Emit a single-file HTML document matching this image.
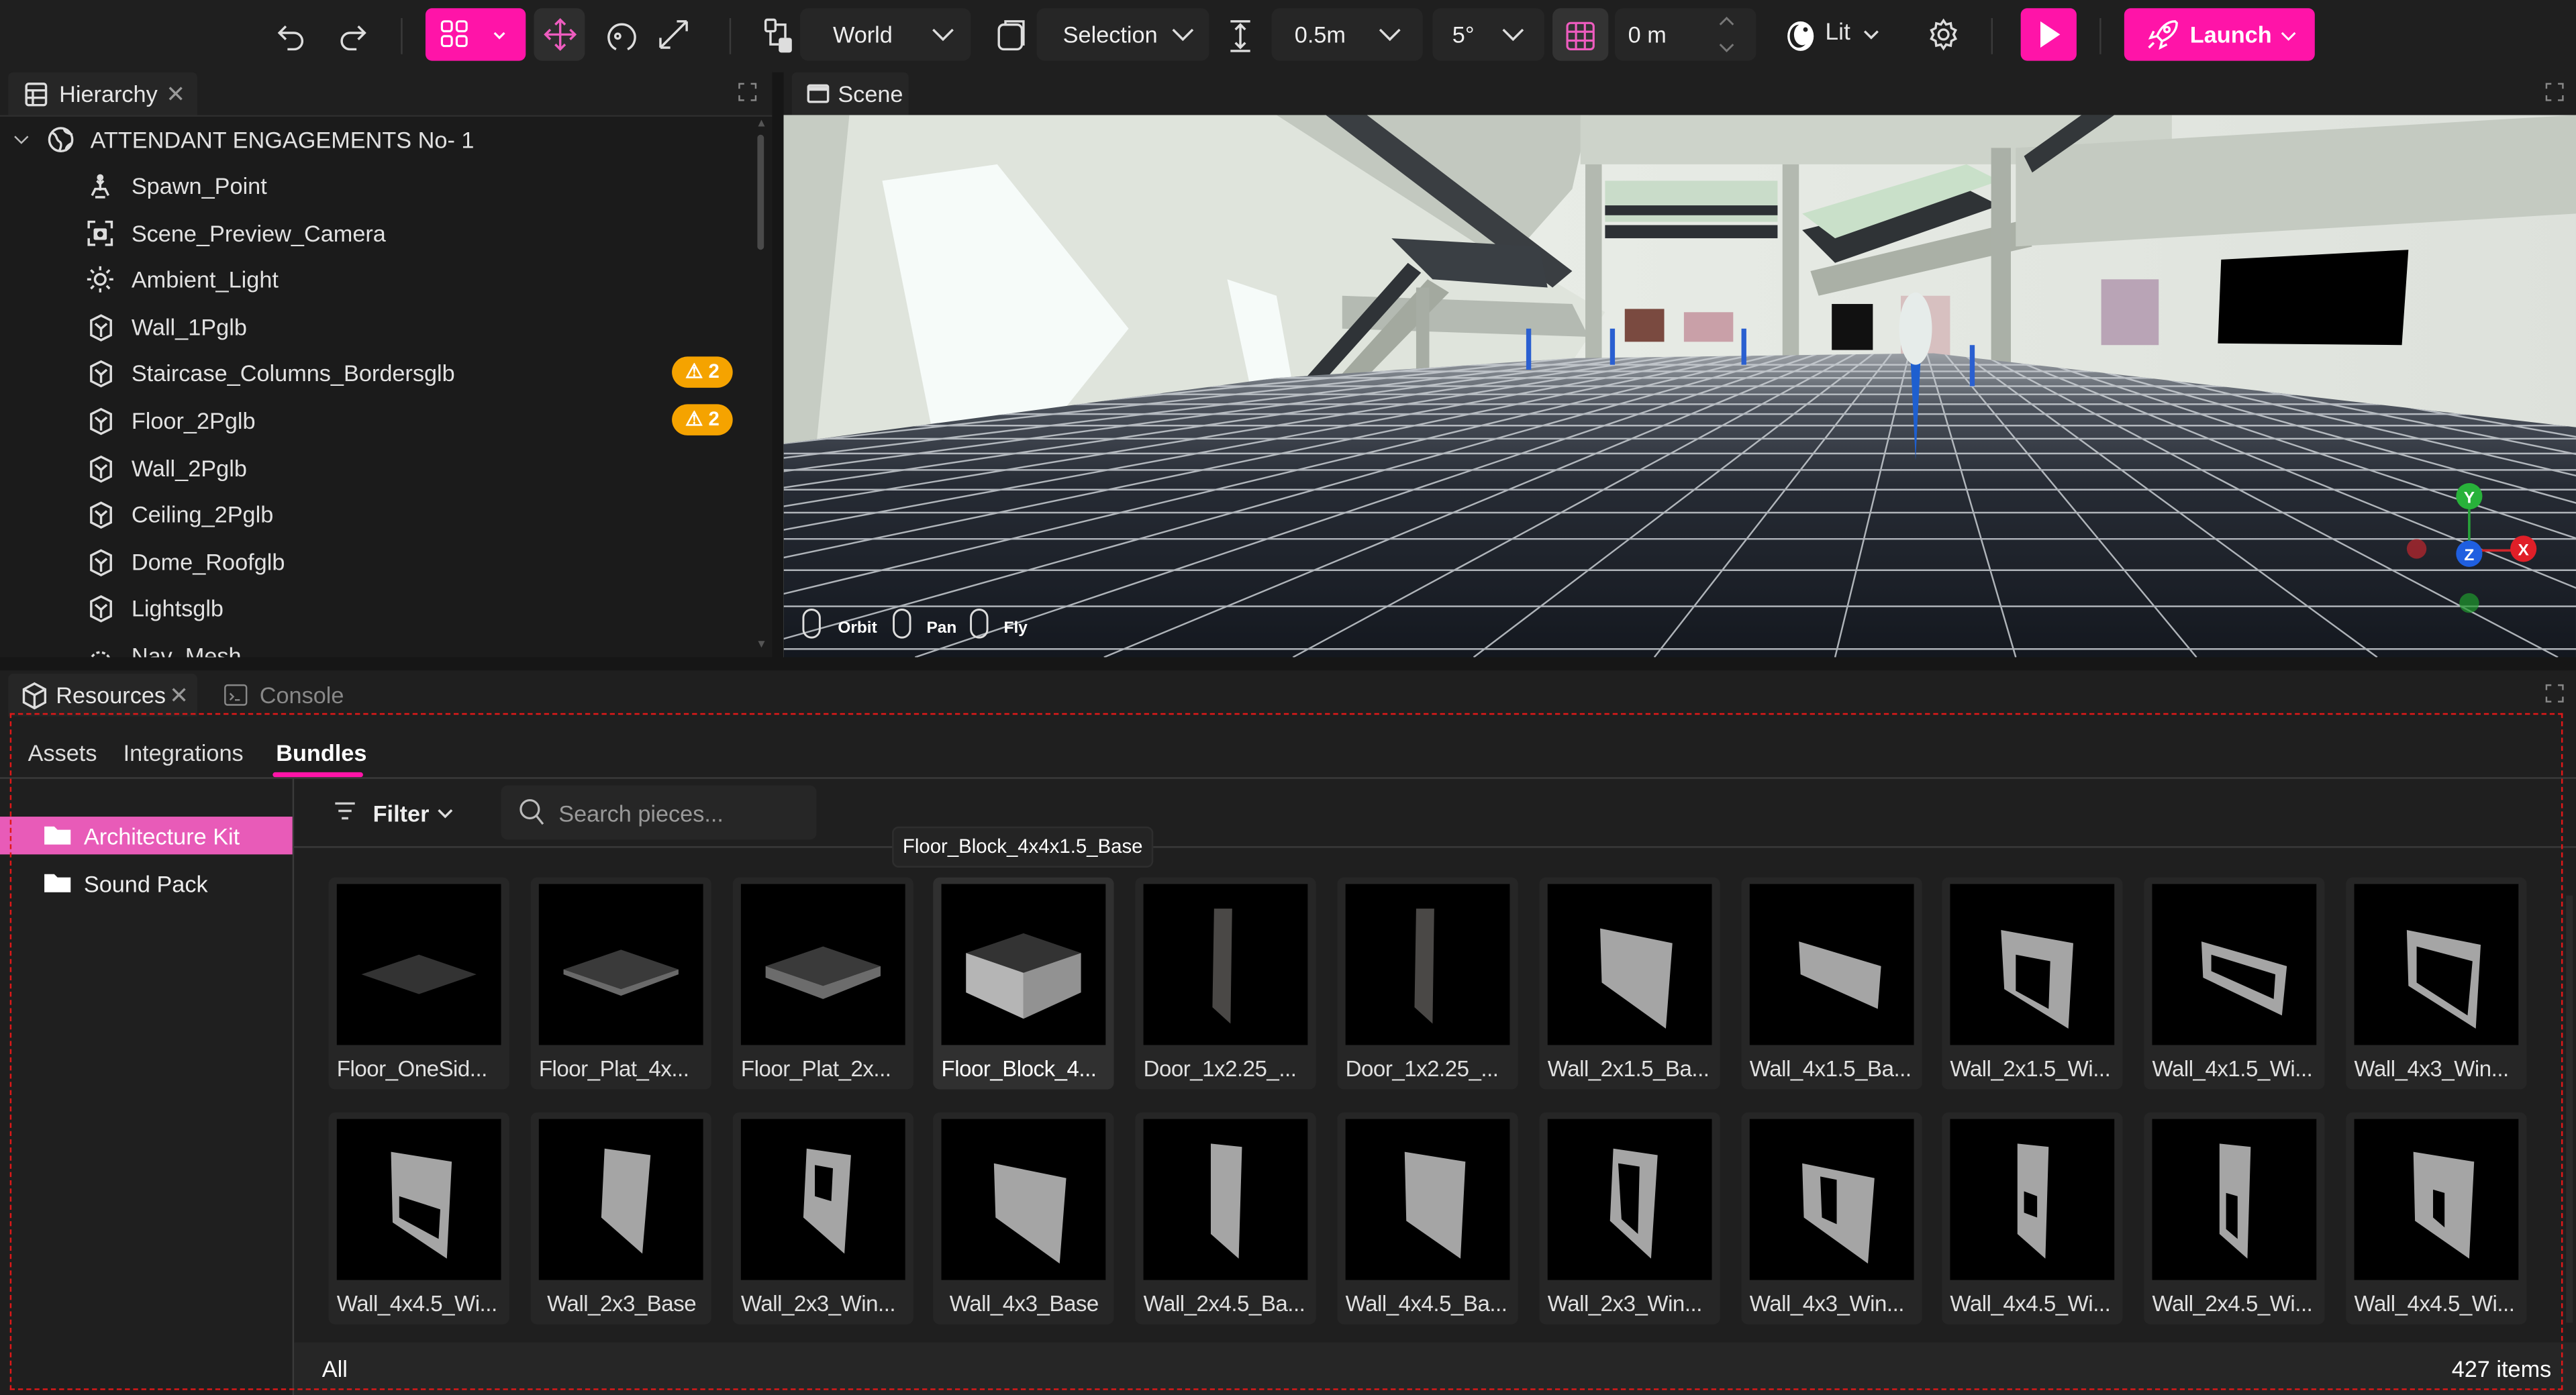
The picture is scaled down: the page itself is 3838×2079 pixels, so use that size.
<!DOCTYPE html>
<html><head><meta charset="utf-8">
<style>
*{box-sizing:border-box;margin:0;padding:0}
html,body{width:3838px;height:2079px;overflow:hidden;background:#1b1b1b}
#w{position:absolute;left:0;top:0;width:1568px;height:849px;transform:scale(2.4477,2.4488);transform-origin:0 0;background:#1b1b1b;font-family:"Liberation Sans",sans-serif;color:#e6e6e6;overflow:hidden}
.a{position:absolute}
.tb{left:0;top:0;width:1568px;height:44px;background:#1f1f1f}
.dd{background:#262626;border-radius:5px;height:32px;top:5px;font-size:14px;color:#eee;line-height:32px}
.sep{width:1px;height:22px;top:11px;background:#3a3a3a}
.pink{background:#ff14a8;border-radius:4px}
.ic{stroke:#ddd;fill:none;stroke-width:1.4}
.tab{background:#262626;height:26px;border-radius:3px 3px 0 0;font-size:14px;line-height:26px}
.row{left:0;height:28px;font-size:14px;line-height:28px;color:#e2e2e2}
.badge{left:409px;width:37px;height:19px;background:#f5a300;border-radius:10px;color:#fff;font-size:12px;font-weight:bold;line-height:19px;text-align:center}
.card{width:110px;height:129px;background:#262626;border-radius:4px}
.card .th{position:absolute;left:5px;top:4px;width:100px;height:98px;background:#000}
.card .lb{position:absolute;left:5px;top:109px;font-size:13.5px;color:#e0e0e0;white-space:nowrap;letter-spacing:-0.2px}
</style></head><body><div id="w">

<!-- toolbar -->
<div class="a tb"></div>
<svg class="a" style="left:166px;top:11px" width="60" height="22"><path class="ic" d="M8 5L4 9l4 4M4 9h9a5 5 0 010 10H9"/><path class="ic" d="M52 5l4 4-4 4M56 9h-9a5 5 0 000 10h4"/></svg>
<div class="a sep" style="left:244px"></div>
<div class="a pink" style="left:259px;top:5px;width:61px;height:32px"></div>
<svg class="a" style="left:268px;top:12px" width="46" height="18"><g fill="none" stroke="#fff" stroke-width="1.3"><rect x="1" y="1" width="6" height="6" rx="1.5"/><rect x="10" y="1" width="6" height="6" rx="1.5"/><rect x="1" y="10" width="6" height="6" rx="1.5"/><rect x="10" y="10" width="6" height="6" rx="1.5"/><path d="M33 8l3 3 3-3"/></g></svg>
<div class="a" style="left:325px;top:5px;width:31px;height:32px;background:#2e2e2e;border-radius:5px"></div>
<svg class="a" style="left:330px;top:10px" width="22" height="22"><g stroke="#ee5cbf" stroke-width="1.4" fill="none"><path d="M11 2v18M2 11h18M8 5l3-3 3 3M8 17l3 3 3-3M5 8l-3 3 3 3M17 8l3 3-3 3"/></g></svg>
<svg class="a" style="left:365px;top:10px" width="60" height="24"><path class="ic" d="M10 20a8 8 0 117 0"/><circle cx="11" cy="12" r="1.5" class="ic"/><path class="ic" d="M37 19L53 3M37 19v-6M37 19h6M53 3h-6M53 3v6"/></svg>
<div class="a sep" style="left:444px"></div>
<svg class="a" style="left:465px;top:11px" width="20" height="22"><rect x="1" y="1" width="6" height="7" rx="1" class="ic"/><rect x="9" y="12" width="8" height="9" rx="1.5" fill="#ddd"/><path class="ic" d="M4 8v8h5M7 4h6v8"/></svg>
<div class="a dd" style="left:487px;width:104px"><span style="position:absolute;left:20px">World</span><svg class="a" style="left:80px;top:12px" width="14" height="8"><path class="ic" d="M1 1l6 6 6-6"/></svg></div>
<svg class="a" style="left:606px;top:11px" width="20" height="22"><rect x="2" y="4" width="14" height="15" rx="3" class="ic"/><path class="ic" d="M6 4V2h11v14h-1"/></svg>
<div class="a dd" style="left:631px;width:105px"><span style="position:absolute;left:16px">Selection</span><svg class="a" style="left:82px;top:12px" width="14" height="8"><path class="ic" d="M1 1l6 6 6-6"/></svg></div>
<svg class="a" style="left:747px;top:11px" width="16" height="22"><path class="ic" d="M2 2h12M2 20h12M8 4v14M5 7l3-3 3 3M5 15l3 3 3-3"/></svg>
<div class="a dd" style="left:774px;width:92px"><span style="position:absolute;left:14px">0.5m</span><svg class="a" style="left:65px;top:12px" width="14" height="8"><path class="ic" d="M1 1l6 6 6-6"/></svg></div>
<div class="a dd" style="left:872px;width:68px"><span style="position:absolute;left:12px">5°</span><svg class="a" style="left:42px;top:12px" width="14" height="8"><path class="ic" d="M1 1l6 6 6-6"/></svg></div>
<div class="a dd" style="left:945px;width:34px;background:#333"></div>
<svg class="a" style="left:953px;top:13px" width="18" height="18"><g stroke="#ee5cbf" stroke-width="1.3" fill="none"><rect x="1" y="1" width="16" height="16" rx="2"/><path d="M6.3 1v16M11.7 1v16M1 6.3h16M1 11.7h16"/></g></svg>
<div class="a dd" style="left:983px;width:86px"><span style="position:absolute;left:8px">0 m</span><svg class="a" style="left:62px;top:4px" width="12" height="24"><path d="M2 6l4-4 4 4M2 18l4 4 4-4" stroke="#777" fill="none" stroke-width="1.2"/></svg></div>
<svg class="a" style="left:1086px;top:11px" width="20" height="22"><ellipse cx="10" cy="11" rx="8" ry="9" fill="#fff"/><ellipse cx="9" cy="11" rx="5.6" ry="7" fill="#1f1f1f"/><ellipse cx="11" cy="10" rx="5" ry="6.5" fill="#fff"/><circle cx="13" cy="7" r="1.4" fill="#1f1f1f"/></svg>
<div class="a" style="left:1111px;top:12px;font-size:14.5px">Lit</div>
<svg class="a" style="left:1134px;top:18px" width="10" height="6"><path class="ic" d="M1 1l4 4 4-4"/></svg>
<svg class="a" style="left:1173px;top:11px" width="20" height="20"><circle cx="10" cy="10" r="3" class="ic"/><path class="ic" d="M10 1.5l1.6 2.4 2.8-.7.4 2.9 2.6 1.3-1.3 2.6 1.3 2.6-2.6 1.3-.4 2.9-2.8-.7L10 18.5l-1.6-2.4-2.8.7-.4-2.9-2.6-1.3L3.9 10 2.6 7.4l2.6-1.3.4-2.9 2.8.7z"/></svg>
<div class="a sep" style="left:1212px"></div>
<div class="a pink" style="left:1230px;top:5px;width:34px;height:32px"></div>
<svg class="a" style="left:1240px;top:12px" width="16" height="18"><path d="M2 1l12 8-12 8z" fill="#fff"/></svg>
<div class="a sep" style="left:1278px"></div>
<div class="a pink" style="left:1293px;top:5px;width:116px;height:32px"></div>
<svg class="a" style="left:1306px;top:11px" width="22" height="20"><g stroke="#fff" stroke-width="1.4" fill="none"><path d="M18 2c-5 0-9 4-11 9l3 3c5-2 9-6 9-11z"/><circle cx="13" cy="7" r="1.6"/><path d="M7 11L3 12l2-4M10 14l-1 4 4-2M5 15l-3 3"/></g></svg>
<div class="a" style="left:1333px;top:13px;font-size:14px;font-weight:bold;color:#fff">Launch</div>
<svg class="a" style="left:1388px;top:19px" width="10" height="6"><path d="M1 1l4 4 4-4" stroke="#fff" fill="none" stroke-width="1.2"/></svg>

<!-- hierarchy -->
<div class="a" style="left:0;top:44px;width:1568px;height:26px;background:#1f1f1f"></div>
<div class="a tab" style="left:5px;top:44px;width:115px"><svg class="a" style="left:10px;top:6px" width="14" height="15"><g class="ic" stroke-width="1.2"><rect x="1" y="1" width="12" height="13" rx="1.5"/><path d="M1 5h12M1 9.5h12M5 5v9"/></g></svg><span style="position:absolute;left:31px">Hierarchy</span><span style="position:absolute;left:96px;color:#999">✕</span></div>
<svg class="a" style="left:449px;top:50px" width="12" height="12"><path d="M1 4V1h3M8 1h3v3M11 8v3H8M4 11H1V8" stroke="#888" fill="none"/></svg>
<div class="a" style="left:0;top:70px;width:470px;height:1px;background:#2e2e2e"></div>
<div class="a row" style="top:71px"><svg class="a" style="left:8px;top:11px" width="10" height="6"><path d="M1 1l4 4 4-4" stroke="#bbb" fill="none"/></svg><svg class="a" style="left:29px;top:6px" width="16" height="16"><circle cx="8" cy="8" r="7" class="ic" stroke-width="1.2"/><path class="ic" stroke-width="1.1" d="M3 4c3 1 2 4 4 5s1 4 0 6M10 1c0 3 3 3 5 4M11 15c0-3 2-4 4-5"/></svg><span style="position:absolute;left:55px;white-space:nowrap">ATTENDANT ENGAGEMENTS No- 1</span></div>
<div class="a" style="left:0;top:99px;width:460px;height:301px;overflow:hidden">
<div class="a row" style="top:0"><svg class="a" style="left:53px;top:6px" width="16" height="16"><path d="M5 15h6M8 2v9M6 5l2 2 2-2M3 14l2-4h6l2 4" stroke="#ddd" fill="none" stroke-width="1.4"/><circle cx="8" cy="3" r="2" fill="#ddd"/></svg><span class="a" style="left:80px">Spawn_Point</span></div>
<div class="a row" style="top:28.6px"><svg class="a" style="left:53px;top:6px" width="16" height="16"><path class="ic" stroke-width="1.2" d="M1 5V1h4M11 1h4v4M15 11v4h-4M5 15H1v-4"/><rect x="4" y="5" width="8" height="7" rx="1" fill="#ddd"/><circle cx="8" cy="8.5" r="1.8" fill="#1b1b1b"/></svg><span class="a" style="left:80px">Scene_Preview_Camera</span></div>
<div class="a row" style="top:57.2px"><svg class="a" style="left:53px;top:6px" width="16" height="16"><circle cx="8" cy="8" r="3.2" class="ic" stroke-width="1.2"/><path class="ic" stroke-width="1.2" d="M8 0v2.5M8 13.5V16M0 8h2.5M13.5 8H16M2.3 2.3l1.8 1.8M11.9 11.9l1.8 1.8M2.3 13.7l1.8-1.8M11.9 4.1l1.8-1.8"/></svg><span class="a" style="left:80px">Ambient_Light</span></div>
<div class="a row" style="top:85.8px"><svg class="a" style="left:54px;top:6px" width="15" height="17"><path class="ic" stroke-width="1.2" d="M7.5 1l6 3v9l-6 3-6-3V4zM4 6l3.5 3 3.5-3M7.5 9v5"/></svg><span class="a" style="left:80px">Wall_1Pglb</span></div>
<div class="a row" style="top:114.4px"><svg class="a" style="left:54px;top:6px" width="15" height="17"><path class="ic" stroke-width="1.2" d="M7.5 1l6 3v9l-6 3-6-3V4zM4 6l3.5 3 3.5-3M7.5 9v5"/></svg><span class="a" style="left:80px">Staircase_Columns_Bordersglb</span></div>
<div class="a row" style="top:143px"><svg class="a" style="left:54px;top:6px" width="15" height="17"><path class="ic" stroke-width="1.2" d="M7.5 1l6 3v9l-6 3-6-3V4zM4 6l3.5 3 3.5-3M7.5 9v5"/></svg><span class="a" style="left:80px">Floor_2Pglb</span></div>
<div class="a row" style="top:171.6px"><svg class="a" style="left:54px;top:6px" width="15" height="17"><path class="ic" stroke-width="1.2" d="M7.5 1l6 3v9l-6 3-6-3V4zM4 6l3.5 3 3.5-3M7.5 9v5"/></svg><span class="a" style="left:80px">Wall_2Pglb</span></div>
<div class="a row" style="top:200.2px"><svg class="a" style="left:54px;top:6px" width="15" height="17"><path class="ic" stroke-width="1.2" d="M7.5 1l6 3v9l-6 3-6-3V4zM4 6l3.5 3 3.5-3M7.5 9v5"/></svg><span class="a" style="left:80px">Ceiling_2Pglb</span></div>
<div class="a row" style="top:228.8px"><svg class="a" style="left:54px;top:6px" width="15" height="17"><path class="ic" stroke-width="1.2" d="M7.5 1l6 3v9l-6 3-6-3V4zM4 6l3.5 3 3.5-3M7.5 9v5"/></svg><span class="a" style="left:80px">Dome_Roofglb</span></div>
<div class="a row" style="top:257.4px"><svg class="a" style="left:54px;top:6px" width="15" height="17"><path class="ic" stroke-width="1.2" d="M7.5 1l6 3v9l-6 3-6-3V4zM4 6l3.5 3 3.5-3M7.5 9v5"/></svg><span class="a" style="left:80px">Lightsglb</span></div>
<div class="a row" style="top:286px"><svg class="a" style="left:53px;top:6px" width="16" height="16"><path class="ic" stroke-width="1.2" d="M2 12a6 6 0 0112 0M1 14h14" stroke-dasharray="2 1.5"/></svg><span class="a" style="left:80px">Nav_Mesh</span></div>
</div>
<div class="a badge" style="top:217px">⚠ 2</div>
<div class="a badge" style="top:246px">⚠ 2</div>
<div class="a" style="left:461px;top:82px;width:4px;height:70px;background:#4a4a4a;border-radius:2px"></div>
<div class="a" style="left:460px;top:72px;font-size:7px;color:#555">▲</div>
<div class="a" style="left:460px;top:389px;font-size:7px;color:#555">▼</div>
<div class="a" style="left:470px;top:44px;width:7px;height:358px;background:#161616"></div>

<!-- scene tab -->
<div class="a tab" style="left:482px;top:44px;width:71px"><svg class="a" style="left:9px;top:7px" width="14" height="12"><rect x="1" y="1" width="12" height="10" rx="1" class="ic" stroke-width="1.3"/><path d="M1 3h12" stroke="#ddd" stroke-width="2.5"/></svg><span style="position:absolute;left:28px">Scene</span></div>
<svg class="a" style="left:1549px;top:50px" width="12" height="12"><path d="M1 4V1h3M8 1h3v3M11 8v3H8M4 11H1V8" stroke="#888" fill="none"/></svg>

<!-- scene viewport -->
<svg class="a" style="left:477px;top:70px" width="1091" height="330" viewBox="0 0 1091 330">
<defs>
<linearGradient id="wl" x1="0" x2="1"><stop offset="0" stop-color="#d3d9d0"/><stop offset=".3" stop-color="#eaeee8"/><stop offset="1" stop-color="#dde1db"/></linearGradient>
<linearGradient id="fl" x1="0" y1="0" x2="0" y2="1"><stop offset="0" stop-color="#a6abb0"/><stop offset=".2" stop-color="#4a505a"/><stop offset=".45" stop-color="#262b34"/><stop offset="1" stop-color="#14181f"/></linearGradient>
<clipPath id="fc"><path d="M0 200L300 160L480 148L700 145L1091 190V330H0z"/></clipPath>
</defs>
<rect width="1091" height="330" fill="url(#wl)"/>
<path d="M0 0h300L500 120 480 150 0 200z" fill="#dfe4dc"/>
<path d="M60 40L130 30 210 130 170 180 90 190z" fill="#f6fbf9"/>
<path d="M270 100L300 110 310 165 285 170z" fill="#f6fbf9"/>
<path d="M0 0h40L20 200H0z" fill="#c6ccc3"/>
<path d="M300 0h190L480 45 440 90z" fill="#c2c8bf"/>
<path d="M330 0l25 0 125 95-12 10z" fill="#3a3e42"/>
<path d="M370 75l90 5 5 25-70-5z" fill="#3a3f44"/>
<path d="M340 110l140 5 10 20-150-5z" fill="#a9afa7" opacity=".8"/>
<path d="M300 180L380 90 388 96 308 185z" fill="#2f3337"/>
<path d="M315 185L392 100 405 108 325 190z" fill="#a3a99f"/>
<rect x="385" y="105" width="8" height="75" fill="#a7ada4"/>
<rect x="485" y="0" width="360" height="30" fill="#cdd3ca"/>
<rect x="488" y="30" width="10" height="140" fill="#b3b9b0"/>
<rect x="608" y="30" width="10" height="140" fill="#b3b9b0"/>
<rect x="500" y="40" width="105" height="25" fill="#c9dcc9"/>
<rect x="500" y="55" width="105" height="6" fill="#2d3135"/>
<rect x="500" y="67" width="105" height="8" fill="#2d3135"/>
<path d="M620 70L720 45 740 55 640 90z" fill="#2f3336"/>
<path d="M620 60L720 30 740 40 640 75z" fill="#c9e0c9"/>
<path d="M625 95L750 65 760 80 630 110z" fill="#aab0a6"/>
<rect x="735" y="20" width="12" height="150" fill="#aab0a7"/>
<path d="M750 20L1091 0V60L750 80z" fill="#c4cac1"/>
<path d="M755 25L790 0h20L760 35z" fill="#33373a"/>
<rect x="512" y="118" width="24" height="20" fill="#7a4a40"/>
<rect x="548" y="120" width="30" height="18" fill="#c9a0a8"/>
<rect x="638" y="115" width="25" height="28" fill="#111"/>
<rect x="680" y="110" width="30" height="40" fill="#d7c0c0"/>
<rect x="802" y="100" width="35" height="40" fill="#b9a4b6"/>
<path d="M875 88L989 82 985 140 873 139z" fill="#000"/>
<rect x="0" y="140" width="1091" height="190" fill="url(#fl)" clip-path="url(#fc)"/>
<g clip-path="url(#fc)" stroke="#c9ced3" stroke-width="1" fill="none" opacity=".85">
<path d="M0 152H1091M0 156H1091M0 160H1091M0 165H1091M0 170H1091M0 176H1091M0 182H1091M0 189H1091M0 197H1091M0 206H1091M0 216H1091M0 228H1091M0 242H1091M0 258H1091M0 277H1091M0 299H1091M0 325H1091"/>
<path d="M690 125L-1800 330M690 125L-1600 330M690 125L-1400 330M690 125L-1200 330M690 125L-1000 330M690 125L-850 330M690 125L-700 330M690 125L-560 330M690 125L-420 330M690 125L-290 330M690 125L-160 330M690 125L-40 330M690 125L80 330M690 125L195 330M690 125L310 330M690 125L420 330M690 125L530 330M690 125L640 330M690 125L750 330M690 125L860 330M690 125L970 330M690 125L1080 330M690 125L1195 330M690 125L1310 330M690 125L1430 330M690 125L1560 330M690 125L1700 330M690 125L1850 330M690 125L2010 330M690 125L2180 330M690 125L2370 330M690 125L2580 330M690 125L2800 330"/>
</g>
<path d="M686 150l6 0-3 60z" fill="#1e5fcf"/>
<ellipse cx="689" cy="130" rx="10" ry="22" fill="#e6ecea"/>
<rect x="452" y="130" width="3" height="25" fill="#2a5fd0"/>
<rect x="503" y="130" width="3" height="22" fill="#2a5fd0"/>
<rect x="583" y="130" width="3" height="22" fill="#2a5fd0"/>
<rect x="722" y="140" width="3" height="25" fill="#2a5fd0"/>
<g font-family="Liberation Sans" font-size="10" font-weight="bold" text-anchor="middle">
<circle cx="994" cy="264" r="6" fill="#c0272d" opacity=".7"/>
<circle cx="1026" cy="297" r="6" fill="#1f9a2e" opacity=".7"/>
<path d="M1026 265h30" stroke="#d0262c" stroke-width="1.5"/>
<path d="M1026 240v25" stroke="#28a23a" stroke-width="1.5"/>
<circle cx="1026" cy="232" r="8" fill="#28b23a"/><text x="1026" y="236" fill="#fff">Y</text>
<circle cx="1026" cy="267" r="8" fill="#1f5fe0"/><text x="1026" y="271" fill="#fff">Z</text>
<circle cx="1059" cy="264" r="8" fill="#e01f28"/><text x="1059" y="268" fill="#fff">X</text>
</g>
<g stroke="#ddd" fill="none" stroke-width="1.2"><rect x="12" y="301" width="10" height="17" rx="5"/><rect x="67" y="301" width="10" height="17" rx="5"/><rect x="114" y="301" width="10" height="17" rx="5"/></g>
<g font-family="Liberation Sans" font-size="10" fill="#fff" font-weight="bold"><text x="33" y="315">Orbit</text><text x="87" y="315">Pan</text><text x="134" y="315">Fly</text></g>
</svg>
<div class="a" style="left:0;top:400px;width:1568px;height:10px;background:#161616"></div>

<!-- resources -->
<div class="a" style="left:0;top:408px;width:1568px;height:441px;background:#1f1f1f"></div>
<div class="a tab" style="left:5px;top:410px;width:115px"><svg class="a" style="left:8px;top:5px" width="16" height="17"><path class="ic" stroke-width="1.3" d="M8 1l6.5 3.5v8L8 16l-6.5-3.5v-8zM1.5 4.5L8 8l6.5-3.5M8 8v8"/></svg><span style="position:absolute;left:29px">Resources</span><span style="position:absolute;left:98px;color:#999">✕</span></div>
<div class="a" style="left:130px;top:410px;height:26px;font-size:14px;line-height:26px;color:#888"><svg class="a" style="left:6px;top:6px" width="15" height="14"><rect x="1" y="1" width="13" height="12" rx="1.5" stroke="#888" fill="none"/><path d="M4 6l2 2-2 2M7 10h3" stroke="#888" fill="none"/></svg><span style="position:absolute;left:28px">Console</span></div>
<svg class="a" style="left:1549px;top:416px" width="12" height="12"><path d="M1 4V1h3M8 1h3v3M11 8v3H8M4 11H1V8" stroke="#888" fill="none"/></svg>

<div class="a" style="left:17px;top:450px;font-size:14px;color:#ddd">Assets</div>
<div class="a" style="left:75px;top:450px;font-size:14px;color:#ddd">Integrations</div>
<div class="a" style="left:168px;top:450px;font-size:14px;color:#fff;font-weight:bold">Bundles</div>
<div class="a" style="left:166px;top:470px;width:55px;height:3px;background:#ff14a8;border-radius:2px"></div>
<div class="a" style="left:0;top:473px;width:1568px;height:1px;background:#3a3a3a"></div>
<div class="a" style="left:178px;top:474px;width:1px;height:375px;background:#3a3a3a"></div>
<div class="a" style="left:0;top:497px;width:178px;height:23px;background:#e85bb8"></div>
<svg class="a" style="left:26px;top:501px" width="18" height="14"><path d="M1 2h6l2 2h8v9H1z" fill="#fff"/></svg>
<div class="a" style="left:51px;top:501px;font-size:14px;color:#fff">Architecture Kit</div>
<svg class="a" style="left:26px;top:530px" width="18" height="14"><path d="M1 2h6l2 2h8v9H1z" fill="#fff"/></svg>
<div class="a" style="left:51px;top:530px;font-size:14px;color:#eee">Sound Pack</div>

<svg class="a" style="left:203px;top:488px" width="14" height="12"><path d="M1 1h12M3 5.5h8M5 10h4" stroke="#ccc" stroke-width="1.4"/></svg>
<div class="a" style="left:227px;top:487px;font-size:14px;font-weight:bold;color:#eee">Filter</div>
<svg class="a" style="left:266px;top:492px" width="10" height="6"><path class="ic" d="M1 1l4 4 4-4"/></svg>
<div class="a" style="left:305px;top:478px;width:192px;height:33px;background:#262626;border-radius:4px"></div>
<svg class="a" style="left:316px;top:486px" width="16" height="17"><circle cx="6.5" cy="6.5" r="5.5" stroke="#bbb" fill="none" stroke-width="1.3"/><path d="M10.5 10.5l4 5" stroke="#bbb" stroke-width="1.3"/></svg>
<div class="a" style="left:340px;top:487px;font-size:14px;color:#999">Search pieces...</div>
<div class="a" style="left:179px;top:515px;width:1389px;height:1px;background:#3a3a3a"></div>

<!-- row 1 -->
<div class="a card" style="left:200px;top:534px"><svg class="th" viewBox="0 0 100 98"><path d="M15 55L50 43 85 55 50 67z" fill="#333"/></svg><div class="lb">Floor_OneSid...</div></div>
<div class="a card" style="left:323px;top:534px"><svg class="th" viewBox="0 0 100 98"><path d="M15 52L50 40 85 52 50 64z" fill="#3a3a3a"/><path d="M15 52L50 64 85 52 85 55 50 68 15 55z" fill="#6a6a6a"/></svg><div class="lb">Floor_Plat_4x...</div></div>
<div class="a card" style="left:446px;top:534px"><svg class="th" viewBox="0 0 100 98"><path d="M15 50L50 38 85 50 50 62z" fill="#3a3a3a"/><path d="M15 50L50 62 85 50 85 56 50 70 15 57z" fill="#6c6c6c"/></svg><div class="lb">Floor_Plat_2x...</div></div>
<div class="a card" style="left:568px;top:534px;background:#303030"><svg class="th" viewBox="0 0 100 98"><path d="M15 42L50 30 85 42 50 54z" fill="#333"/><path d="M15 42L50 54 50 82 15 66z" fill="#b5b5b5"/><path d="M50 54L85 42 85 66 50 82z" fill="#929292"/></svg><div class="lb" style="color:#fff">Floor_Block_4...</div></div>
<div class="a card" style="left:691px;top:534px"><svg class="th" viewBox="0 0 100 98"><path d="M43 15L54 15 53 85 42 75z" fill="#4a4846"/></svg><div class="lb">Door_1x2.25_...</div></div>
<div class="a card" style="left:814px;top:534px"><svg class="th" viewBox="0 0 100 98"><path d="M43 15L54 15 53 85 42 75z" fill="#4a4846"/></svg><div class="lb">Door_1x2.25_...</div></div>
<div class="a card" style="left:937px;top:534px"><svg class="th" viewBox="0 0 100 98"><path d="M32 27L76 36 72 88 33 60z" fill="#a5a5a5"/></svg><div class="lb">Wall_2x1.5_Ba...</div></div>
<div class="a card" style="left:1060px;top:534px"><svg class="th" viewBox="0 0 100 98"><path d="M30 35L80 50 78 76 31 55z" fill="#a5a5a5"/></svg><div class="lb">Wall_4x1.5_Ba...</div></div>
<div class="a card" style="left:1182px;top:534px"><svg class="th" viewBox="0 0 100 98"><path d="M31 28L75 36 72 88 33 64z M40 43L40 65 60 76 61 47z" fill="#a5a5a5" fill-rule="evenodd"/></svg><div class="lb">Wall_2x1.5_Wi...</div></div>
<div class="a card" style="left:1305px;top:534px"><svg class="th" viewBox="0 0 100 98"><path d="M30 35L82 50 79 80 31 57z M36 43L36 53 74 70 75 55z" fill="#a5a5a5" fill-rule="evenodd"/></svg><div class="lb">Wall_4x1.5_Wi...</div></div>
<div class="a card" style="left:1428px;top:534px"><svg class="th" viewBox="0 0 100 98"><path d="M32 28L77 37 74 88 33 62z M38 38L38 60 69 80 72 47z" fill="#a5a5a5" fill-rule="evenodd"/></svg><div class="lb">Wall_4x3_Win...</div></div>
<!-- row 2 -->
<div class="a card" style="left:200px;top:677px"><svg class="th" viewBox="0 0 100 98"><path d="M33 20L70 26 67 85 34 63z M38 47L38 60 62 73 63 55z" fill="#a5a5a5" fill-rule="evenodd"/></svg><div class="lb">Wall_4x4.5_Wi...</div></div>
<div class="a card" style="left:323px;top:677px"><svg class="th" viewBox="0 0 100 98"><path d="M40 18L68 22 63 82 38 60z" fill="#a5a5a5"/></svg><div class="lb" style="left:10px">Wall_2x3_Base</div></div>
<div class="a card" style="left:446px;top:677px"><svg class="th" viewBox="0 0 100 98"><path d="M40 18L67 22 63 82 38 60z M45 28L45 47 55 50 56 30z" fill="#a5a5a5" fill-rule="evenodd"/></svg><div class="lb">Wall_2x3_Win...</div></div>
<div class="a card" style="left:568px;top:677px"><svg class="th" viewBox="0 0 100 98"><path d="M32 27L76 36 72 88 33 60z" fill="#a5a5a5"/></svg><div class="lb" style="left:10px">Wall_4x3_Base</div></div>
<div class="a card" style="left:691px;top:677px"><svg class="th" viewBox="0 0 100 98"><path d="M41 15L60 17 58 85 41 70z" fill="#a5a5a5"/></svg><div class="lb">Wall_2x4.5_Ba...</div></div>
<div class="a card" style="left:814px;top:677px"><svg class="th" viewBox="0 0 100 98"><path d="M36 20L73 26 70 85 37 62z" fill="#a5a5a5"/></svg><div class="lb">Wall_4x4.5_Ba...</div></div>
<div class="a card" style="left:937px;top:677px"><svg class="th" viewBox="0 0 100 98"><path d="M40 18L67 22 63 85 38 62z M43 27L45 61 55 70 56 29z" fill="#a5a5a5" fill-rule="evenodd"/></svg><div class="lb">Wall_2x3_Win...</div></div>
<div class="a card" style="left:1060px;top:677px"><svg class="th" viewBox="0 0 100 98"><path d="M32 27L76 36 72 88 33 60z M43 35L44 60 53 64 53 37z" fill="#a5a5a5" fill-rule="evenodd"/></svg><div class="lb">Wall_4x3_Win...</div></div>
<div class="a card" style="left:1182px;top:677px"><svg class="th" viewBox="0 0 100 98"><path d="M41 15L60 17 58 85 41 70z M45 44L45 57 53 60 53 47z" fill="#a5a5a5" fill-rule="evenodd"/></svg><div class="lb">Wall_4x4.5_Wi...</div></div>
<div class="a card" style="left:1305px;top:677px"><svg class="th" viewBox="0 0 100 98"><path d="M41 15L60 17 58 85 41 70z M45 45L45 67 52 73 52 47z" fill="#a5a5a5" fill-rule="evenodd"/></svg><div class="lb">Wall_2x4.5_Wi...</div></div>
<div class="a card" style="left:1428px;top:677px"><svg class="th" viewBox="0 0 100 98"><path d="M36 20L73 26 70 85 37 62z M48 43L48 60 55 66 55 45z" fill="#a5a5a5" fill-rule="evenodd"/></svg><div class="lb">Wall_4x4.5_Wi...</div></div>

<div class="a" style="left:1562px;top:545px;width:4px;height:260px;background:#2a2a2a"></div>

<div class="a" style="left:179px;top:817px;width:1389px;height:32px;background:#262626"></div>
<div class="a" style="left:196px;top:825px;font-size:14px;color:#fff">All</div>
<div class="a" style="right:15px;top:825px;font-size:14px;color:#fff">427 items</div>

<div class="a" style="left:543px;top:503px;width:159px;height:25px;background:#242424;border-radius:4px;border:1px solid #2e2e2e;font-size:12px;line-height:23px;text-align:center;color:#fff">Floor_Block_4x4x1.5_Base</div>

<div class="a" style="left:6px;top:434px;width:1554px;height:412px;border:1.5px dashed #e01818;pointer-events:none"></div>
</div></body></html>
